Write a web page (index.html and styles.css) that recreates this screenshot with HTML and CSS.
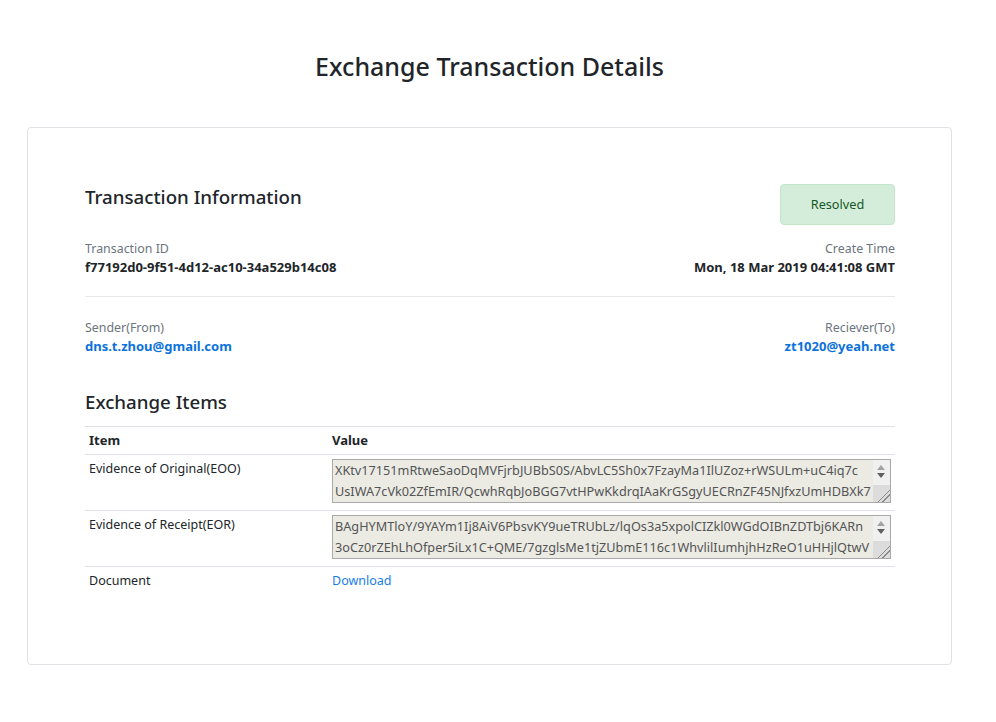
FILE: index.html
```html
<!DOCTYPE html>
<html lang="en">
<head>
<meta charset="utf-8">
<title>Exchange Transaction Details</title>
<link rel="stylesheet" href="styles.css">
</head>
<body>
<div class="page">
  <h1 class="page-title">Exchange Transaction Details</h1>
  <div class="card">
    <div class="card-head">
      <h2 class="section-title">Transaction Information</h2>
      <div class="status">Resolved</div>
    </div>
    <div class="info-row">
      <div class="info">
        <div class="label">Transaction ID</div>
        <div class="value">f77192d0-9f51-4d12-ac10-34a529b14c08</div>
      </div>
      <div class="info right">
        <div class="label">Create Time</div>
        <div class="value">Mon, 18 Mar 2019 04:41:08 GMT</div>
      </div>
    </div>
    <hr class="divider">
    <div class="info-row">
      <div class="info">
        <div class="label">Sender(From)</div>
        <a class="value link" href="#">dns.t.zhou@gmail.com</a>
      </div>
      <div class="info right">
        <div class="label">Reciever(To)</div>
        <a class="value link" href="#">zt1020@yeah.net</a>
      </div>
    </div>
    <h2 class="section-title items-title">Exchange Items</h2>
    <table class="items">
      <thead>
        <tr><th class="col-item">Item</th><th>Value</th></tr>
      </thead>
      <tbody>
        <tr>
          <td>Evidence of Original(EOO)</td>
          <td>
            <div class="textarea">
              <div class="ta-text">
                <div class="ta-line">XKtv17151mRtweSaoDqMVFjrbJUBbS0S/AbvLC5Sh0x7FzayMa1IlUZoz+rWSULm+uC4iq7c</div>
                <div class="ta-line">UsIWA7cVk02ZfEmIR/QcwhRqbJoBGG7vtHPwKkdrqIAaKrGSgyUECRnZF45NJfxzUmHDBXk7</div>
              </div>
              <div class="ta-scroll">
                <span class="arrow up"></span>
                <span class="arrow down"></span>
                <span class="grip"></span>
              </div>
            </div>
          </td>
        </tr>
        <tr>
          <td>Evidence of Receipt(EOR)</td>
          <td>
            <div class="textarea">
              <div class="ta-text">
                <div class="ta-line">BAgHYMTloY/9YAYm1Ij8AiV6PbsvKY9ueTRUbLz/lqOs3a5xpolCIZkl0WGdOIBnZDTbj6KARn</div>
                <div class="ta-line">3oCz0rZEhLhOfper5iLx1C+QME/7gzglsMe1tjZUbmE116c1WhvlilIumhjhHzReO1uHHjlQtwV</div>
              </div>
              <div class="ta-scroll">
                <span class="arrow up"></span>
                <span class="arrow down"></span>
                <span class="grip"></span>
              </div>
            </div>
          </td>
        </tr>
        <tr>
          <td>Document</td>
          <td><a class="download" href="#">Download</a></td>
        </tr>
      </tbody>
    </table>
  </div>
</div>
</body>
</html>
```
FILE: styles.css
```css
* { box-sizing: border-box; }
html, body { margin: 0; padding: 0; background: #fff; }
body {
  font-family: "Noto Sans", "Open Sans", sans-serif;
  color: #212529;
  font-size: 13.4px;
  line-height: 19px;
}
.page { width: 979px; }
.page-title {
  margin: 51px 0 0;
  text-align: center;
  font-size: 25px;
  line-height: 30px;
  font-weight: 500;
  color: #212529;
}
.card {
  margin: 46px 27px 0;
  border: 1px solid #dfe2e6;
  border-radius: 4px;
  padding: 56px 56px 70px 57px;
}
.card-head {
  display: flex;
  justify-content: space-between;
  align-items: flex-start;
}
.section-title {
  margin: 2px 0 0;
  font-size: 18.7px;
  line-height: 22px;
  font-weight: 500;
}
.status {
  width: 115px;
  height: 41px;
  display: flex;
  align-items: center;
  justify-content: center;
  background: #d4edda;
  border: 1px solid #c3e6cb;
  border-radius: 4px;
  color: #155724;
  font-size: 12.7px;
}
.info-row {
  display: flex;
  justify-content: space-between;
  margin-top: 14px;
}
.info { display: flex; flex-direction: column; }
.info.right { text-align: right; align-items: flex-end; }
.label { color: #6c757d; font-size: 12.4px; }
.value { font-weight: 700; font-size: 13px; }
.link { color: #0b72db; text-decoration: none; }
.divider {
  margin: 19px 0 0;
  border: 0;
  border-top: 1px solid #e5e8eb;
}
.divider + .info-row { margin-top: 21px; }
.items-title { margin-top: 35px; }
.items {
  width: 100%;
  table-layout: fixed;
  border-collapse: collapse;
  margin-top: 13px;
  font-size: 12.5px;
}
.items th, .items td {
  text-align: left;
  vertical-align: top;
  padding: 4px;
  border-top: 1px solid #dee2e6;
}
.items th { font-weight: 700; font-size: 13px; padding-bottom: 4px; }
.col-item { width: 30%; }
.items tbody tr:not(:last-child) td { padding-bottom: 7px; }
.textarea {
  display: flex;
  width: 559px;
  height: 44px;
  border: 1px solid #a9a9a9;
  background: #ebebe4;
  color: #545454;
  font-size: 12.7px;
  line-height: 21px;
  overflow: hidden;
}
.ta-text {
  flex: 1;
  min-width: 0;
  padding: 0 2px;
  overflow: hidden;
}
.ta-line { white-space: nowrap; overflow: hidden; }
.ta-scroll {
  position: relative;
  width: 17px;
  flex: none;
  background: #f0f0f0;
}
.arrow {
  position: absolute;
  left: 4px;
  width: 0;
  height: 0;
  border-left: 4.5px solid transparent;
  border-right: 4.5px solid transparent;
}
.arrow.up { top: 5px; border-bottom: 5px solid #a3a3a3; }
.arrow.down { top: 13px; border-top: 5px solid #606060; }
.grip {
  position: absolute;
  left: 0;
  bottom: 0;
  width: 17px;
  height: 17px;
  background:
    linear-gradient(135deg, transparent 0 62%, #8a8a8a 62% 66%, transparent 66% 76%, #8a8a8a 76% 80%, transparent 80%),
    #dcdcdc;
}
.download { color: #1a7ee6; text-decoration: none; }
```
